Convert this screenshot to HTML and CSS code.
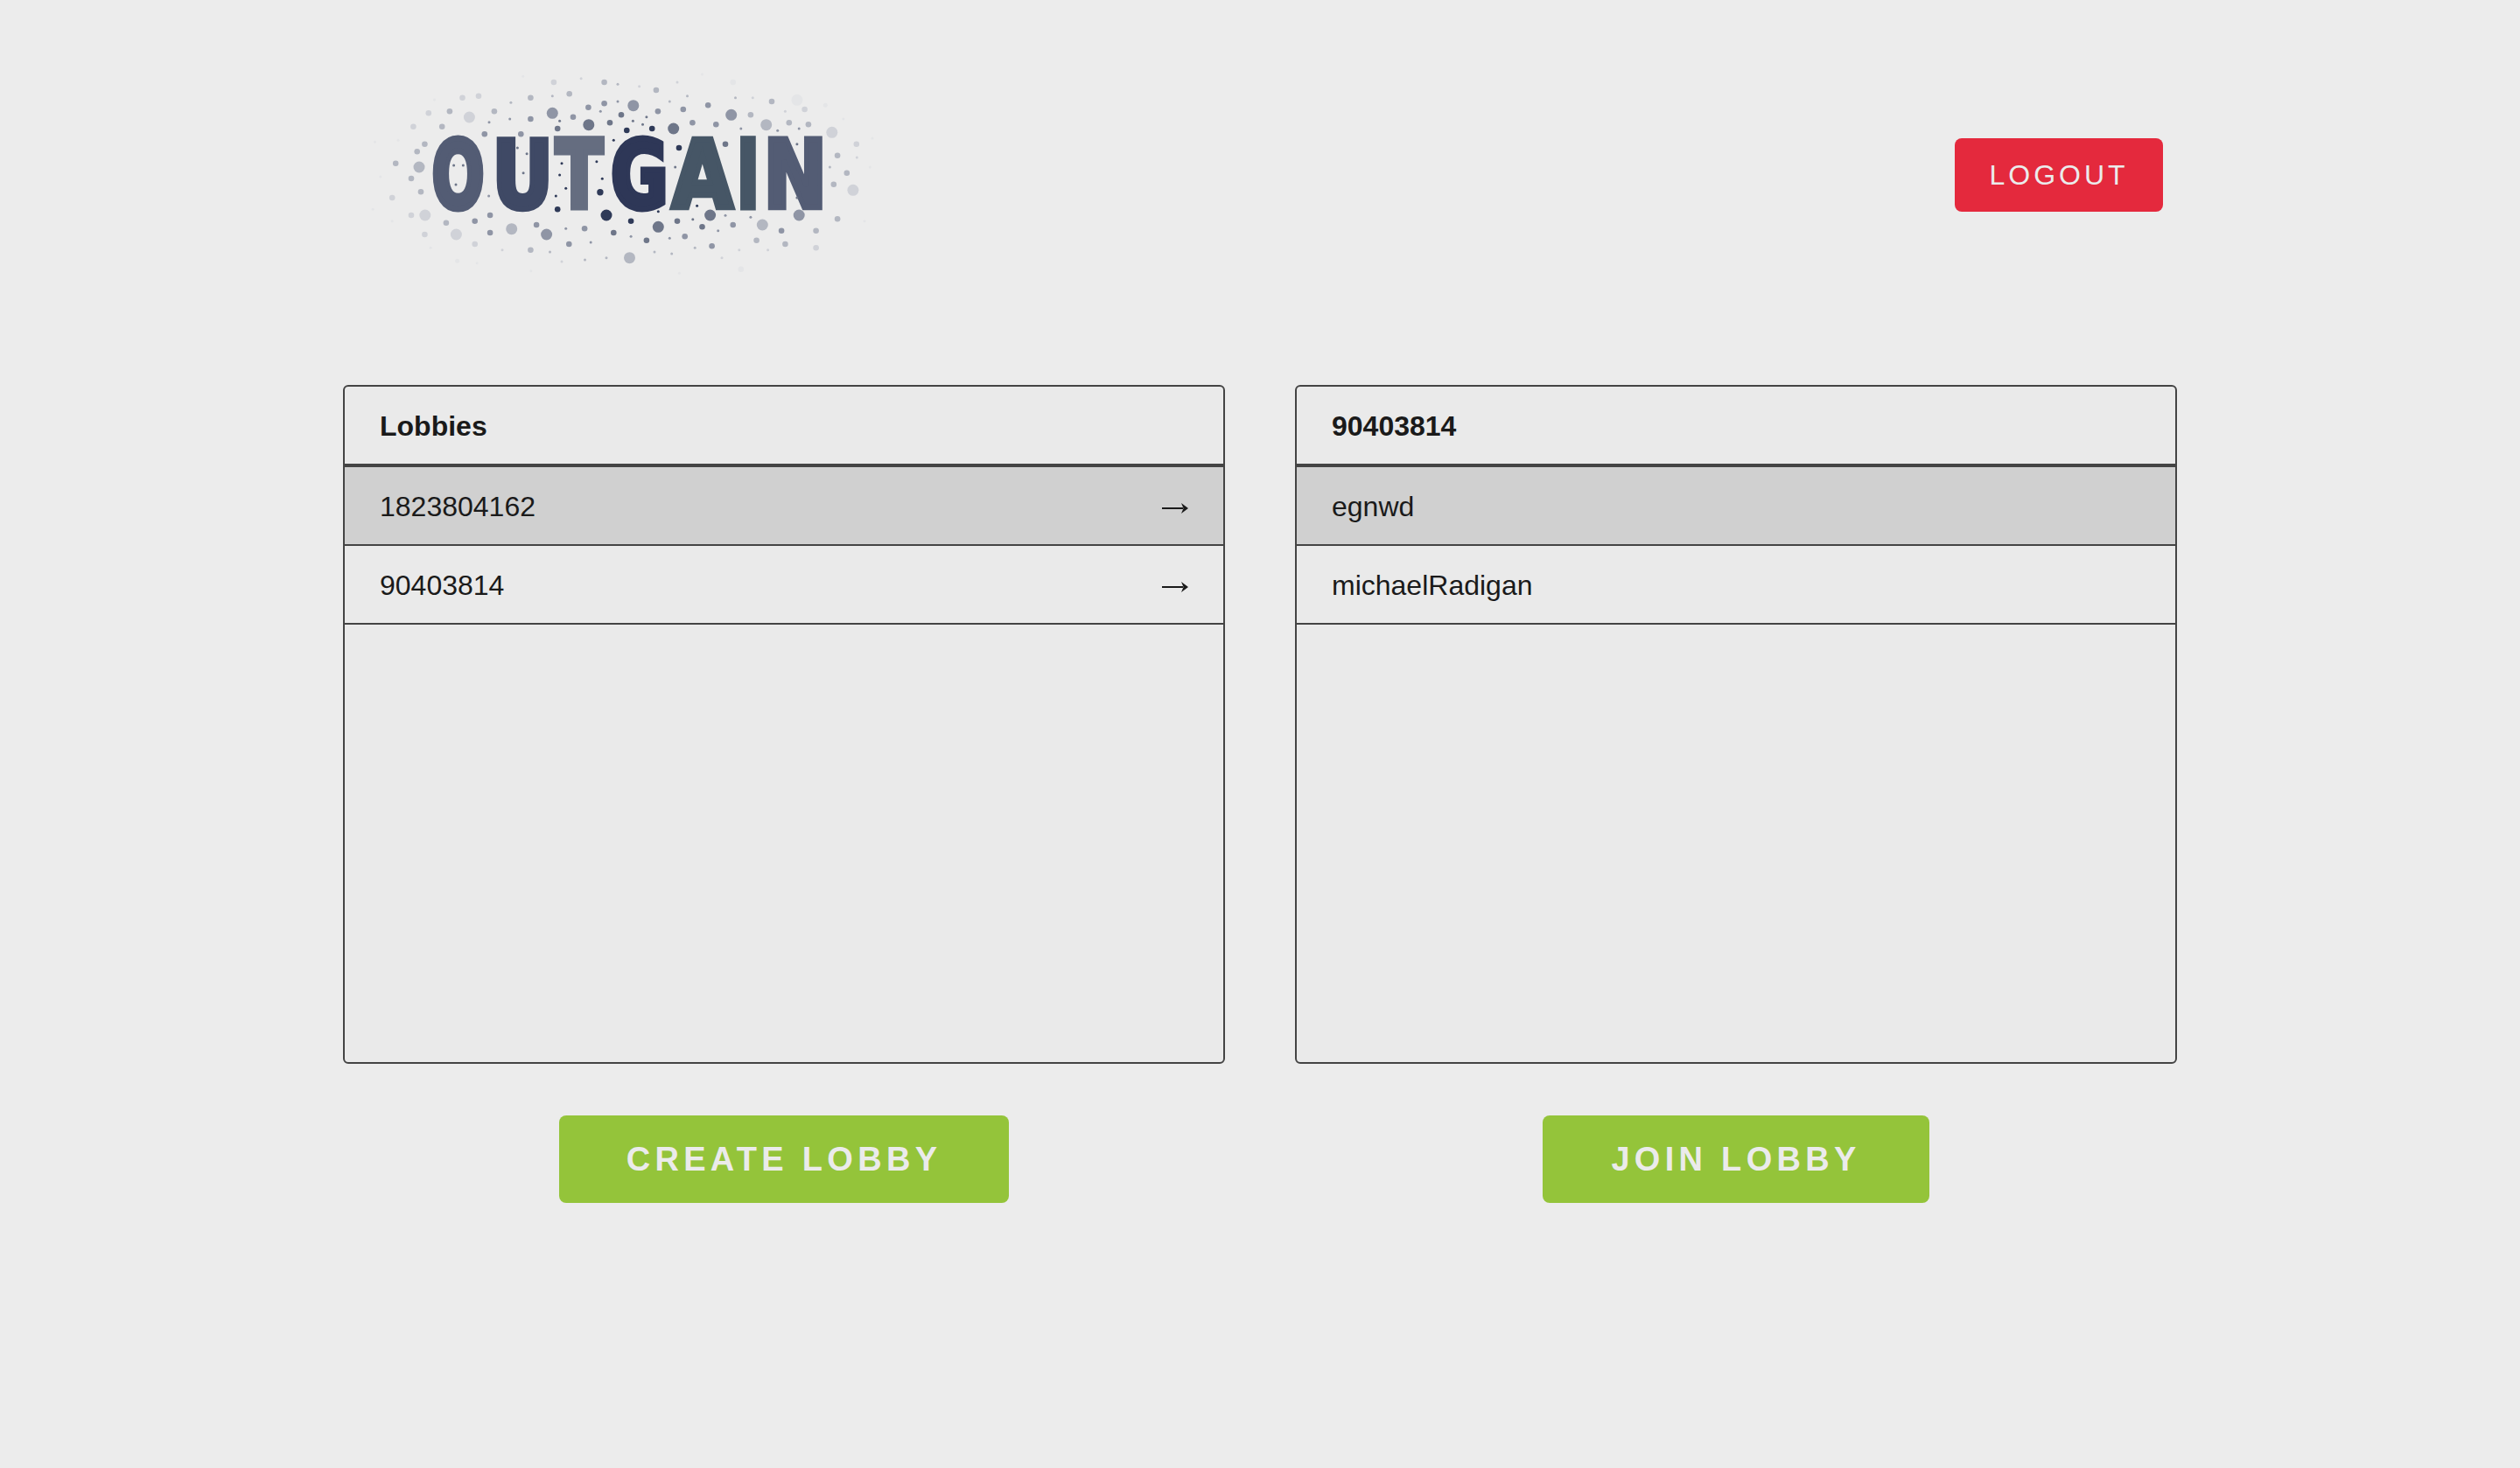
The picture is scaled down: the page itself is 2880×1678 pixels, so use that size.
FILE: index.html
```html
<!DOCTYPE html>
<html lang="en">
<head>
  <meta charset="UTF-8" />
  <title>Outgain</title>
  <link rel="stylesheet" href="styles.css">
</head>
<body>
<div class="container">
  <div class="header">
    <svg class="logo" viewBox="0 0 620 270" role="img" aria-label="Outgain">
      <g class="c1">
        <circle cx="293" cy="186" r="6.5"/><circle cx="316.3" cy="89" r="3.3"/><circle cx="345.2" cy="87" r="3.3"/><circle cx="376" cy="109" r="3.3"/><circle cx="321.1" cy="192.7" r="3.3"/><circle cx="237.2" cy="179.3" r="3.3"/><circle cx="285.9" cy="159.7" r="3.7"/>
        <circle cx="301.3" cy="100.3" r="1.5"/><circle cx="242" cy="126.7" r="1.5"/><circle cx="281.9" cy="124.7" r="1.5"/><circle cx="239.6" cy="140" r="1.5"/><circle cx="288.3" cy="144.3" r="1.5"/><circle cx="246.7" cy="155.3" r="1.5"/><circle cx="235.3" cy="164" r="1.5"/><circle cx="396.6" cy="175.3" r="1.5"/><circle cx="352.3" cy="181.7" r="1.5"/>
      </g>
      <g class="c2">
        <circle cx="272.8" cy="82.7" r="6.5"/><circle cx="369.7" cy="87" r="6.5"/><circle cx="411.6" cy="186" r="6.5"/><circle cx="352.3" cy="199.3" r="6.5"/>
        <circle cx="310" cy="71.3" r="3.3"/><circle cx="297" cy="80.3" r="3.3"/><circle cx="237.2" cy="87" r="3.3"/><circle cx="429" cy="104.7" r="3.3"/><circle cx="301.3" cy="206" r="3.3"/><circle cx="338.9" cy="214.7" r="3.3"/><circle cx="374" cy="192.7" r="3.3"/><circle cx="402.5" cy="199.3" r="3.3"/>
        <circle cx="338.9" cy="73.7" r="1.5"/><circle cx="323.4" cy="78.3" r="1.5"/><circle cx="334.5" cy="82.3" r="1.5"/><circle cx="239.6" cy="78.3" r="1.5"/><circle cx="191.4" cy="109" r="1.5"/><circle cx="202.1" cy="115.7" r="1.5"/><circle cx="198.1" cy="137.7" r="1.5"/><circle cx="371.7" cy="131" r="1.5"/><circle cx="391.8" cy="190.7" r="1.5"/>
      </g>
      <g class="c3">
        <circle cx="224.6" cy="208" r="6.5"/><circle cx="231.3" cy="69.3" r="6.5"/><circle cx="323.8" cy="60.7" r="6.5"/><circle cx="435.7" cy="71.3" r="6.5"/><circle cx="513.2" cy="186" r="6.5"/>
        <circle cx="206.4" cy="76" r="3.3"/><circle cx="255" cy="73.7" r="3.3"/><circle cx="272.4" cy="62.7" r="3.3"/><circle cx="290.6" cy="58.3" r="3.3"/><circle cx="351.9" cy="67.3" r="3.3"/><circle cx="380.8" cy="65" r="3.3"/><circle cx="409.2" cy="60.3" r="3.3"/><circle cx="391.4" cy="80.3" r="3.3"/><circle cx="418.3" cy="82.3" r="3.3"/><circle cx="153.8" cy="93.3" r="3.3"/><circle cx="195.3" cy="93.3" r="3.3"/><circle cx="142.7" cy="192.7" r="3.3"/><circle cx="160.1" cy="186" r="3.3"/><circle cx="160.1" cy="206" r="3.3"/><circle cx="213.1" cy="197" r="3.3"/><circle cx="250.3" cy="219" r="3.3"/><circle cx="268.1" cy="201.3" r="3.3"/><circle cx="382.7" cy="210.3" r="3.3"/><circle cx="437.7" cy="197" r="3.3"/><circle cx="413.6" cy="221.3" r="3.3"/><circle cx="493.1" cy="203.7" r="3.3"/>
        <circle cx="306" cy="56" r="1.5"/><circle cx="286.3" cy="67.3" r="1.5"/><circle cx="182.7" cy="76" r="1.5"/><circle cx="159" cy="79.7" r="1.5"/><circle cx="446.8" cy="87" r="1.5"/><circle cx="488.7" cy="89.3" r="1.5"/><circle cx="513.2" cy="87" r="1.5"/><circle cx="429" cy="186.3" r="1.5"/><circle cx="457.9" cy="188.3" r="1.5"/><circle cx="420.7" cy="203.7" r="1.5"/><circle cx="158.6" cy="164" r="1.5"/><circle cx="246.7" cy="201.3" r="1.5"/><circle cx="275.2" cy="217" r="1.5"/><circle cx="321.1" cy="210.3" r="1.5"/><circle cx="365.3" cy="212.3" r="1.5"/>
      </g>
      <g class="c4">
        <circle cx="79" cy="131" r="6.5"/><circle cx="184.7" cy="201.7" r="6.5"/><circle cx="475.7" cy="82.7" r="6.5"/><circle cx="471.3" cy="197" r="6.5"/><circle cx="319.5" cy="234.7" r="6.5"/>
        <circle cx="290.6" cy="34" r="3.3"/><circle cx="349.9" cy="43" r="3.3"/><circle cx="250.7" cy="47.3" r="3.3"/><circle cx="206.4" cy="51.7" r="3.3"/><circle cx="113.9" cy="67.3" r="3.3"/><circle cx="164.9" cy="67.3" r="3.3"/><circle cx="457.9" cy="71.3" r="3.3"/><circle cx="482" cy="56" r="3.3"/><circle cx="501.8" cy="80.3" r="3.3"/><circle cx="523.9" cy="82.3" r="3.3"/><circle cx="105.2" cy="84.7" r="3.3"/><circle cx="85.4" cy="104.7" r="3.3"/><circle cx="76.7" cy="113.3" r="3.3"/><circle cx="52.2" cy="126.7" r="3.3"/><circle cx="557.1" cy="117.7" r="3.3"/><circle cx="567.8" cy="137.7" r="3.3"/><circle cx="552.8" cy="150.7" r="3.3"/><circle cx="70" cy="144" r="3.3"/><circle cx="81" cy="159.3" r="3.3"/><circle cx="109.9" cy="194.7" r="3.3"/><circle cx="206.4" cy="225.7" r="3.3"/><circle cx="464.6" cy="214.7" r="3.3"/><circle cx="497.4" cy="219" r="3.3"/><circle cx="532.6" cy="203.7" r="3.3"/><circle cx="557.1" cy="190.3" r="3.3"/>
        <circle cx="306" cy="36.3" r="1.5"/><circle cx="385.5" cy="49.7" r="1.5"/><circle cx="365.3" cy="56" r="1.5"/><circle cx="231.3" cy="49.7" r="1.5"/><circle cx="183.9" cy="57.3" r="1.5"/><circle cx="440.5" cy="51.7" r="1.5"/><circle cx="548.4" cy="131" r="1.5"/><circle cx="394.2" cy="223.3" r="1.5"/><circle cx="348" cy="228" r="1.5"/><circle cx="367.7" cy="230" r="1.5"/><circle cx="293" cy="234.7" r="1.5"/><circle cx="268.5" cy="237" r="1.5"/><circle cx="228.5" cy="228" r="1.5"/>
      </g>
      <g class="c5">
        <circle cx="136.4" cy="74" r="6.5"/><circle cx="85.8" cy="186" r="6.5"/><circle cx="121.4" cy="208" r="6.5"/><circle cx="550.8" cy="91.3" r="6.5"/><circle cx="574.9" cy="157.3" r="6.5"/>
        <circle cx="232.9" cy="34" r="3.3"/><circle cx="147" cy="49.7" r="3.3"/><circle cx="128.5" cy="51.7" r="3.3"/><circle cx="89.8" cy="69.3" r="3.3"/><circle cx="519.6" cy="65" r="3.3"/><circle cx="72.4" cy="84.7" r="3.3"/><circle cx="578.8" cy="104.7" r="3.3"/><circle cx="48.2" cy="166" r="3.3"/><circle cx="70" cy="186" r="3.3"/><circle cx="85.4" cy="208" r="3.3"/><circle cx="142.7" cy="219" r="3.3"/><circle cx="532.6" cy="223.3" r="3.3"/>
        <circle cx="264.1" cy="29.7" r="1.5"/><circle cx="330.6" cy="38.7" r="1.5"/><circle cx="374" cy="34" r="1.5"/><circle cx="460.3" cy="51.7" r="1.5"/><circle cx="497.4" cy="67.3" r="1.5"/><circle cx="579.3" cy="120" r="1.5"/><circle cx="242" cy="239" r="1.5"/><circle cx="174" cy="225.7" r="1.5"/><circle cx="444.8" cy="225.7" r="1.5"/><circle cx="477.6" cy="225.7" r="1.5"/><circle cx="425" cy="234.7" r="1.5"/>
      </g>
      <g class="c6">
        <circle cx="510.9" cy="54.3" r="6.5"/>
        <circle cx="437.7" cy="34" r="3.3"/><circle cx="446.8" cy="247.7" r="3.3"/>
        <circle cx="594.3" cy="131" r="1.5"/><circle cx="588" cy="192.7" r="1.5"/><circle cx="55" cy="100.3" r="1.5"/><circle cx="34.8" cy="142" r="1.5"/><circle cx="206.8" cy="249.7" r="1.5"/><circle cx="376.4" cy="252.3" r="1.5"/><circle cx="48.2" cy="192.7" r="1.5"/><circle cx="28.5" cy="102.3" r="1.5"/><circle cx="197.7" cy="27.3" r="1.5"/><circle cx="402.5" cy="25" r="1.5"/><circle cx="96.5" cy="54" r="1.5"/><circle cx="543.3" cy="60.3" r="2.5"/><circle cx="563.9" cy="76" r="1.5"/><circle cx="597" cy="98" r="1.5"/><circle cx="92.1" cy="223.3" r="1.5"/><circle cx="122.6" cy="238.3" r="2.5"/><circle cx="145.1" cy="240.7" r="1.5"/><circle cx="26.1" cy="179.3" r="1.5"/>
      </g>
      <g class="wordmark">
        <text class="l-o" transform="translate(93.6 177) scale(.66 1)">O</text>
        <text class="l-u" transform="translate(162.5 177) scale(.8 1)">U</text>
        <text class="l-t" transform="translate(235 177) scale(.74 1)">T</text>
        <text class="l-g" transform="translate(298 177) scale(.75 1)">G</text>
        <text class="l-a" transform="translate(368 177) scale(.84 1)">A</text>
        <text class="l-a" transform="translate(442 177) scale(.65 1)">I</text>
        <text class="l-o" transform="translate(472.5 177) scale(.81 1)">N</text>
      </g>
      <g class="c2">
        <circle cx="118.6" cy="129" r="1.5"/><circle cx="129.3" cy="129" r="1.5"/><circle cx="121" cy="151" r="1.5"/><circle cx="510.9" cy="104.7" r="1.5"/><circle cx="510.9" cy="166" r="1.5"/>
      </g>
    </svg>
    <button class="btn btn-logout">LOGOUT</button>
  </div>

  <div class="columns">
    <div class="column">
      <div class="panel">
        <div class="panel-title">Lobbies</div>
        <div class="row selected">
          <span>1823804162</span>
          <svg class="arrow" viewBox="0 0 30 12"><path d="M0 5h24v2H0z"/><path d="M22 0l8 6-8 6 2.500-6z"/></svg>
        </div>
        <div class="row">
          <span>90403814</span>
          <svg class="arrow" viewBox="0 0 30 12"><path d="M0 5h24v2H0z"/><path d="M22 0l8 6-8 6 2.500-6z"/></svg>
        </div>
      </div>
      <button class="btn btn-green btn-create">CREATE LOBBY</button>
    </div>

    <div class="column">
      <div class="panel">
        <div class="panel-title">90403814</div>
        <div class="row selected"><span>egnwd</span></div>
        <div class="row"><span>michaelRadigan</span></div>
      </div>
      <button class="btn btn-green btn-join">JOIN LOBBY</button>
    </div>
  </div>
</div>
</body>
</html>
```

FILE: styles.css
```css
body {
  font-family: 'Liberation Sans', Arial, sans-serif;
  background: #ececec;
  color: #1a1a1a;
  margin: 0;
}
.container {
  width: 2096px;
  margin: 0 auto;
}
.header {
  display: flex;
  justify-content: space-between;
  align-items: flex-start;
  padding: 60px 16px 0 8px;
}
.logo {
  display: block;
  width: 620px;
  height: 270px;
}
.c1 { fill: #2f3a58; }
.c2 { fill: #6e7689; }
.c3 { fill: #8f95a5; }
.c4 { fill: #b3b7c1; }
.c5 { fill: #d0d2d8; }
.c6 { fill: #e4e5e7; }
.wordmark text {
  font-family: 'DejaVu Sans', sans-serif;
  font-weight: bold;
  font-size: 107px;
  stroke-width: 6px;
  stroke-linejoin: miter;
  vector-effect: non-scaling-stroke;
}
.l-o { fill: #535c74; stroke: #535c74; }
.l-u { fill: #3f4965; stroke: #3f4965; }
.l-t { fill: #656d80; stroke: #656d80; }
.l-g { fill: #2e3757; stroke: #2e3757; }
.l-a { fill: #465666; stroke: #465666; }
.btn {
  display: block;
  border: none;
  border-radius: 8px;
  color: #ebebeb;
  font-family: inherit;
  padding: 0;
}
.btn-logout {
  width: 238px;
  height: 84px;
  margin-top: 98px;
  background: #e4293d;
  font-size: 32px;
  letter-spacing: 4px;
}
.btn-green {
  height: 100px;
  margin-top: 59px;
  background: #94c43a;
  font-size: 38px;
  font-weight: bold;
  letter-spacing: 5.3px;
}
.btn-create { width: 514px; }
.btn-join { width: 442px; }
.columns {
  display: grid;
  grid-template-columns: 1fr 1fr;
  gap: 80px;
  margin-top: 110px;
}
.column {
  display: flex;
  flex-direction: column;
  align-items: center;
}
.panel {
  box-sizing: border-box;
  width: 100%;
  height: 776px;
  background: #eaeaea;
  border: 2px solid #444;
  border-radius: 6px;
  font-size: 32px;
}
.panel-title {
  height: 88px;
  line-height: 90px;
  padding: 0 40px;
  font-weight: bold;
  border-bottom: 4px solid #444;
}
.row {
  display: flex;
  justify-content: space-between;
  align-items: center;
  height: 86px;
  padding: 2px 40px 0;
  border-bottom: 2px solid #444;
}
.selected {
  background: #d0d0d0;
}
.arrow {
  display: block;
  width: 30px;
  height: 12px;
  margin-top: 4px;
  fill: #1a1a1a;
}
```
